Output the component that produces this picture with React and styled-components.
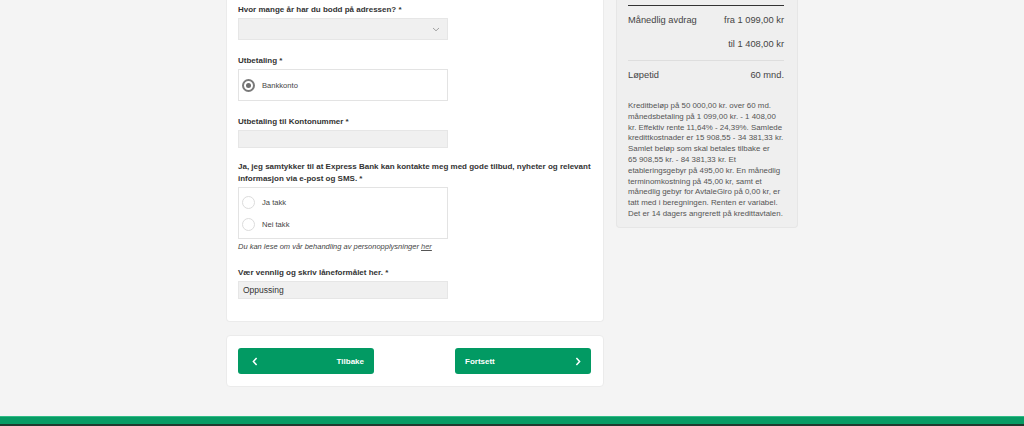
import React from "react";
import styled, { createGlobalStyle } from "styled-components";

const GlobalStyle = createGlobalStyle`
  html, body {
    margin: 0;
    padding: 0;
    background: #f4f4f4;
    font-family: "Liberation Sans", Arial, sans-serif;
  }
`;

const App = () => {
  return (
    <>
      <GlobalStyle />
      <Page>
        <Main>
          <FormColumn>
            <FormCard>
              <Field>
                <Label>Hvor mange år har du bodd på adressen? *</Label>
                <Select>
                  <svg width="8" height="5" viewBox="0 0 8 5">
                    <path d="M1 1 L4 3.8 L7 1" fill="none" stroke="#999" strokeWidth="0.9" />
                  </svg>
                </Select>
              </Field>

              <Field gap={15}>
                <Label>Utbetaling *</Label>
                <RadioBox pad={4}>
                  <RadioRow>
                    <Radio checked />
                    <RadioText>Bankkonto</RadioText>
                  </RadioRow>
                </RadioBox>
              </Field>

              <Field gap={15}>
                <Label>Utbetaling til Kontonummer *</Label>
                <Input />
              </Field>

              <Field gap={13}>
                <Label>
                  Ja, jeg samtykker til at Express Bank kan kontakte meg med gode tilbud, nyheter og relevant
                  informasjon via e-post og SMS. *
                </Label>
                <RadioBox pad={3} spaced>
                  <RadioRow>
                    <Radio />
                    <RadioText>Ja takk</RadioText>
                  </RadioRow>
                  <RadioRow>
                    <Radio />
                    <RadioText>Nei takk</RadioText>
                  </RadioRow>
                </RadioBox>
                <Note>
                  Du kan lese om vår behandling av personopplysninger <a href="#">her</a>
                </Note>
              </Field>

              <Field gap={14}>
                <Label>Vær vennlig og skriv låneformålet her. *</Label>
                <Input>Oppussing</Input>
              </Field>
            </FormCard>

            <NavCard>
              <NavButton>
                <svg width="6" height="9" viewBox="0 0 6 9">
                  <path d="M4.6 1 L1.4 4.5 L4.6 8" fill="none" stroke="#fff" strokeWidth="1.5" />
                </svg>
                <span>Tilbake</span>
              </NavButton>
              <NavButton>
                <span>Fortsett</span>
                <svg width="6" height="9" viewBox="0 0 6 9">
                  <path d="M1.4 1 L4.6 4.5 L1.4 8" fill="none" stroke="#fff" strokeWidth="1.5" />
                </svg>
              </NavButton>
            </NavCard>
          </FormColumn>

          <Sidebar>
            <TopRule />
            <SumRow>
              <span>Månedlig avdrag</span>
              <span>fra 1 099,00 kr</span>
            </SumRow>
            <SumRow end>
              <span>til 1 408,00 kr</span>
            </SumRow>
            <Divider />
            <SumRow>
              <span>Løpetid</span>
              <span>60 mnd.</span>
            </SumRow>
            <Terms>
              Kreditbeløp på 50 000,00 kr. over 60 md. månedsbetaling på 1 099,00 kr. - 1 408,00 kr. Effektiv
              rente 11,64% - 24,39%. Samlede kredittkostnader er 15 908,55 - 34 381,33 kr. Samlet beløp som skal
              betales tilbake er
              <br />
              65 908,55 kr. - 84 381,33 kr. Et etableringsgebyr på 495,00 kr. En månedlig
              terminomkostning på 45,00 kr, samt et månedlig gebyr for AvtaleGiro på 0,00 kr, er tatt med i
              beregningen. Renten er variabel. Det er 14 dagers angrerett på kredittavtalen.
            </Terms>
          </Sidebar>
        </Main>
        <Footer />
      </Page>
    </>
  );
};

// ================= Styled Components =================
const Page = styled.div`
  display: flex;
  flex-direction: column;
  min-height: 426px;
`;

const Main = styled.div`
  display: flex;
  align-items: flex-start;
  gap: 12px;
  width: 572px;
  margin: 0 auto;
`;

const FormColumn = styled.div`
  width: 378px;
  display: flex;
  flex-direction: column;
  gap: 13px;
`;

const FormCard = styled.div`
  background: #fff;
  border: 1px solid #ebebeb;
  border-top: none;
  border-radius: 0 0 4px 4px;
  padding: 4px 11px 22px;
`;

const Field = styled.div`
  display: flex;
  flex-direction: column;
  margin-top: ${(p) => p.gap || 0}px;
`;

const Label = styled.div`
  font-size: 8px;
  font-weight: bold;
  line-height: 12px;
  color: #333;
  margin-bottom: 2px;
`;

const Select = styled.div`
  width: 210px;
  height: 22px;
  box-sizing: border-box;
  background: #f0f0f0;
  border: 1px solid #e6e6e6;
  display: flex;
  align-items: center;
  justify-content: flex-end;
  padding-right: 7px;
`;

const Input = styled.div`
  width: 210px;
  height: 18px;
  box-sizing: border-box;
  background: #f0f0f0;
  border: 1px solid #e6e6e6;
  padding-left: 4px;
  font-size: 8.5px;
  line-height: 16px;
  color: #333;
`;

const RadioBox = styled.div`
  width: 210px;
  box-sizing: border-box;
  border: 1px solid #e3e3e3;
  background: #fff;
  padding: ${(p) => p.pad}px 0;
  display: flex;
  flex-direction: column;
  margin-bottom: ${(p) => (p.spaced ? 2 : 0)}px;
`;

const RadioRow = styled.div`
  display: flex;
  align-items: center;
  height: 22px;
  padding-left: 3px;
  gap: 7px;
`;

const Radio = styled.span`
  width: 13px;
  height: 13px;
  box-sizing: border-box;
  border-radius: 50%;
  border: ${(p) => (p.checked ? "2px solid #7a7a7a" : "1.5px solid #dcdcdc")};
  background: #fff;
  display: flex;
  align-items: center;
  justify-content: center;
  &::after {
    content: "";
    width: 5px;
    height: 5px;
    border-radius: 50%;
    background: #6e6e6e;
    display: ${(p) => (p.checked ? "block" : "none")};
  }
`;

const RadioText = styled.span`
  font-size: 7.6px;
  color: #444;
`;

const Note = styled.div`
  font-size: 7.5px;
  font-style: italic;
  line-height: 12px;
  color: #444;
  a {
    color: #555;
    text-decoration: underline;
  }
`;

const NavCard = styled.div`
  background: #fff;
  border: 1px solid #ebebeb;
  border-radius: 4px;
  padding: 12px 12px 12px 11px;
  display: flex;
  justify-content: space-between;
`;

const NavButton = styled.button`
  width: 136px;
  height: 26px;
  background: #029a63;
  border: none;
  border-radius: 3px;
  color: #fff;
  font-family: "Liberation Sans", Arial, sans-serif;
  font-size: 8px;
  font-weight: bold;
  display: flex;
  align-items: center;
  justify-content: space-between;
  padding: 0 10px 0 14px;
  cursor: pointer;
  &:last-child {
    padding: 0 10px 0 10px;
  }
`;

const Sidebar = styled.div`
  width: 182px;
  box-sizing: border-box;
  background: #efefef;
  border: 1px solid #e6e6e6;
  border-top: none;
  border-radius: 0 0 4px 4px;
  padding: 5px 13px 7px 11px;
`;

const TopRule = styled.div`
  border-top: 1px solid #333;
`;

const SumRow = styled.div`
  display: flex;
  justify-content: ${(p) => (p.end ? "flex-end" : "space-between")};
  font-size: 9.3px;
  line-height: 14px;
  color: #444;
  padding: 7px 0 3px;
`;

const Divider = styled.div`
  border-top: 1px solid #dedede;
  margin-top: 6px;
`;

const Terms = styled.p`
  margin: 16px 0 0;
  font-size: 7.9px;
  line-height: 10.8px;
  color: #555;
`;

const Footer = styled.div`
  margin-top: auto;
  height: 10px;
  background: #079b64;
  border-top: 1px solid #2fbb85;
  border-bottom: 2px solid #1f3a2e;
  box-sizing: border-box;
`;

export default App;
